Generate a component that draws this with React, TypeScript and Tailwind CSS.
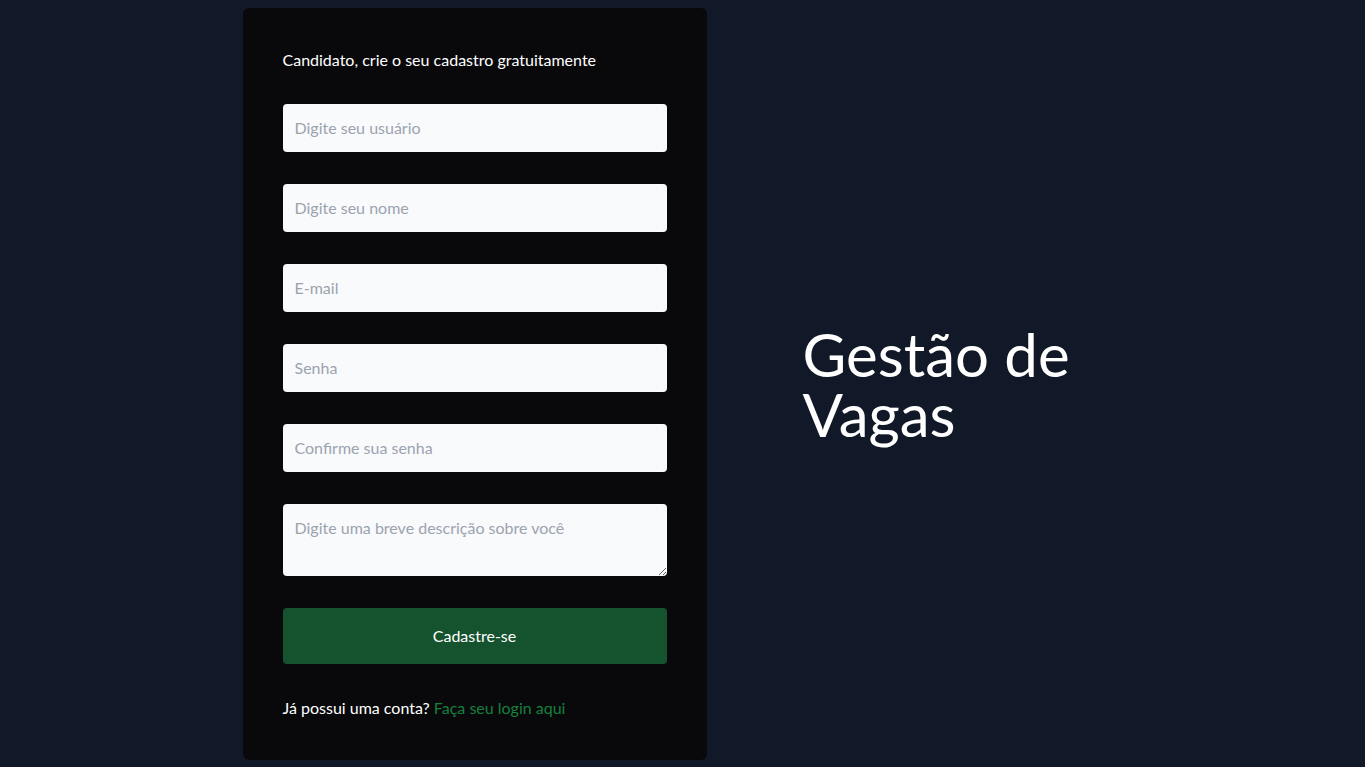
export default function App() {
  const font = { fontFamily: 'Lato, "Noto Sans", sans-serif' };
  return (
    <div className="min-h-screen bg-[#111827] flex items-center justify-center gap-24" style={font}>
      <div className="w-[464px] bg-[#09090b] rounded-md p-10 flex flex-col gap-8">
        <h2 className="text-white text-base leading-6">Candidato, crie o seu cadastro gratuitamente</h2>
        <input className="h-12 w-full rounded bg-[#f8fafc] px-3 text-base text-gray-700 placeholder:text-[#9ca3af] outline-none" placeholder="Digite seu usuário" />
        <input className="h-12 w-full rounded bg-[#f8fafc] px-3 text-base text-gray-700 placeholder:text-[#9ca3af] outline-none" placeholder="Digite seu nome" />
        <input className="h-12 w-full rounded bg-[#f8fafc] px-3 text-base text-gray-700 placeholder:text-[#9ca3af] outline-none" placeholder="E-mail" />
        <input type="password" className="h-12 w-full rounded bg-[#f8fafc] px-3 text-base text-gray-700 placeholder:text-[#9ca3af] outline-none" placeholder="Senha" />
        <input type="password" className="h-12 w-full rounded bg-[#f8fafc] px-3 text-base text-gray-700 placeholder:text-[#9ca3af] outline-none" placeholder="Confirme sua senha" />
        <textarea className="h-[72px] w-full rounded bg-[#f8fafc] px-3 py-3 text-base leading-6 text-gray-700 placeholder:text-[#9ca3af] outline-none block" placeholder="Digite uma breve descrição sobre você" />
        <button className="h-14 w-full rounded bg-[#15532e] text-white text-base">Cadastre-se</button>
        <p className="text-white text-base leading-6">
          Já possui uma conta? <a className="text-[#15803d]" href="#">Faça seu login aqui</a>
        </p>
      </div>
      <div className="w-80 text-white text-6xl leading-none">Gestão de Vagas</div>
    </div>
  );
}
